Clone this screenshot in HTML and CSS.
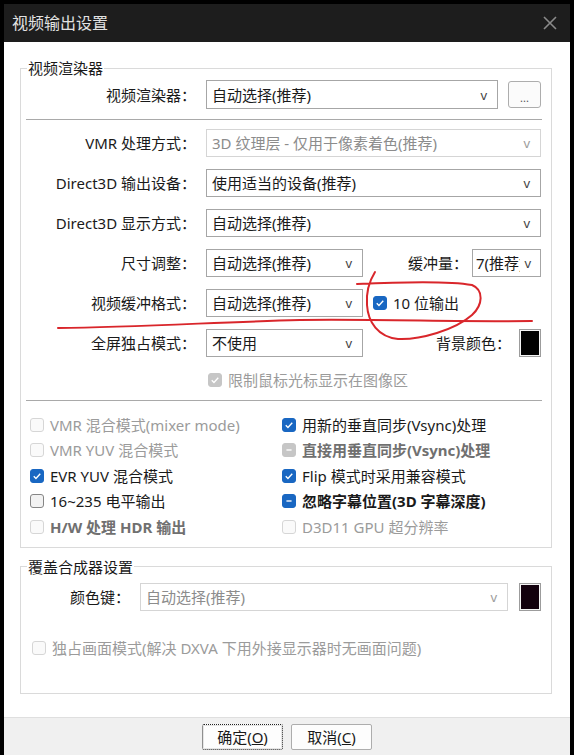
FILE: index.html
```html
<!DOCTYPE html>
<html lang="zh-CN">
<head>
	<meta charset="UTF-8">
	<meta name="viewport" content="width=device-width, initial-scale=1.0">
	<title>视频输出设置</title>
	<link rel="stylesheet" href="styles.css">
</head>
<body>
	<div class="window">
		<div class="titlebar">
			<span class="title">视频输出设置</span>
			<svg class="close" viewBox="0 0 14 14"><path d="M1 1L13 13M13 1L1 13"/></svg>
		</div>
		<div class="content">
			<fieldset class="group renderer">
				<legend>视频渲染器</legend>
				<div class="row first">
					<span class="label">视频渲染器：</span>
					<div class="ctrl">
						<div class="select grow"><span class="val">自动选择(推荐)</span><span class="arrow">v</span></div>
						<button class="more">...</button>
					</div>
				</div>
				<div class="sep"></div>
				<div class="row">
					<span class="label">VMR 处理方式：</span>
					<div class="ctrl">
						<div class="select grow disabled"><span class="val">3D 纹理层 - 仅用于像素着色(推荐)</span><span class="arrow">v</span></div>
					</div>
				</div>
				<div class="row">
					<span class="label">Direct3D 输出设备：</span>
					<div class="ctrl">
						<div class="select grow"><span class="val">使用适当的设备(推荐)</span><span class="arrow">v</span></div>
					</div>
				</div>
				<div class="row">
					<span class="label">Direct3D 显示方式：</span>
					<div class="ctrl">
						<div class="select grow"><span class="val">自动选择(推荐)</span><span class="arrow">v</span></div>
					</div>
				</div>
				<div class="row">
					<span class="label">尺寸调整：</span>
					<div class="ctrl">
						<div class="select mid"><span class="val">自动选择(推荐)</span><span class="arrow">v</span></div>
						<span class="sublabel buffer">缓冲量：</span>
						<div class="select tiny"><span class="val">7(推荐)</span><span class="arrow">v</span></div>
					</div>
				</div>
				<div class="row">
					<span class="label">视频缓冲格式：</span>
					<div class="ctrl">
						<div class="select mid"><span class="val">自动选择(推荐)</span><span class="arrow">v</span></div>
						<span class="cb ten-bit">
							<span class="box on"><svg viewBox="0 0 14 14"><path d="M3.2 7.2L5.8 9.8L10.8 4.4"/></svg></span>
							<span>10 位输出</span>
						</span>
					</div>
				</div>
				<div class="row">
					<span class="label">全屏独占模式：</span>
					<div class="ctrl">
						<div class="select mid"><span class="val">不使用</span><span class="arrow">v</span></div>
						<span class="sublabel bg">背景颜色：</span>
						<span class="swatch"><i class="black"></i></span>
					</div>
				</div>
				<div class="row check-row">
					<span></span>
					<span class="cb muted confine">
						<span class="box dis-on"><svg viewBox="0 0 14 14"><path d="M3.2 7.2L5.8 9.8L10.8 4.4"/></svg></span>
						<span>限制鼠标光标显示在图像区</span>
					</span>
				</div>
				<div class="sep"></div>
				<div class="checks">
					<span class="cb muted"><span class="box dis"></span><span>VMR 混合模式(mixer mode)</span></span>
					<span class="cb"><span class="box on"><svg viewBox="0 0 14 14"><path d="M3.2 7.2L5.8 9.8L10.8 4.4"/></svg></span><span>用新的垂直同步(Vsync)处理</span></span>
					<span class="cb muted"><span class="box dis"></span><span>VMR YUV 混合模式</span></span>
					<span class="cb grey bold"><span class="box dis-on"><svg viewBox="0 0 14 14"><path d="M4 7H10"/></svg></span><span>直接用垂直同步(Vsync)处理</span></span>
					<span class="cb"><span class="box on"><svg viewBox="0 0 14 14"><path d="M3.2 7.2L5.8 9.8L10.8 4.4"/></svg></span><span>EVR YUV 混合模式</span></span>
					<span class="cb"><span class="box on"><svg viewBox="0 0 14 14"><path d="M3.2 7.2L5.8 9.8L10.8 4.4"/></svg></span><span>Flip 模式时采用兼容模式</span></span>
					<span class="cb"><span class="box"></span><span>16~235 电平输出</span></span>
					<span class="cb bold"><span class="box on"><svg viewBox="0 0 14 14"><path d="M4 7H10"/></svg></span><span>忽略字幕位置(3D 字幕深度)</span></span>
					<span class="cb grey bold"><span class="box dis"></span><span>H/W 处理 HDR 输出</span></span>
					<span class="cb muted"><span class="box dis"></span><span>D3D11 GPU 超分辨率</span></span>
				</div>
			</fieldset>

			<fieldset class="group overlay">
				<legend>覆盖合成器设置</legend>
				<div class="row key-row">
					<span class="label">颜色键：</span>
					<div class="ctrl">
						<div class="select grow disabled"><span class="val">自动选择(推荐)</span><span class="arrow">v</span></div>
						<span class="swatch key"><i class="dark"></i></span>
					</div>
				</div>
				<div class="exclusive">
					<span class="cb muted"><span class="box dis"></span><span>独占画面模式(解决 DXVA 下用外接显示器时无画面问题)</span></span>
				</div>
			</fieldset>
		</div>
		<div class="footer">
			<button class="btn default">确定(<u>O</u>)</button>
			<button class="btn">取消(<u>C</u>)</button>
		</div>
	</div>

	<!-- red pen marks drawn over the screenshot -->
	<svg class="marks" viewBox="0 0 574 755">
		<path d="M58 328C140 327 220 322 300 320C380 319 460 322 532 321"/>
		<path d="M357 284C400 282 450 281 472 285C484 290 483 305 472 315C455 330 420 340 398 339C378 337 368 322 367 305C366 292 370 280 375 272"/>
	</svg>
</body>
</html>
```

FILE: styles.css
```css
* {
	box-sizing: border-box;
}

body {
	margin: 0;
	background: #000;
	font-family: "Noto Sans", "Noto Sans CJK SC", sans-serif;
	font-size: 15px;
	color: #1a1a1a;
	position: relative;
	height: 755px;
	overflow: hidden;
}

.window {
	margin: 4px 4px 0;
	width: 566px;
	background: #fff;
}

.titlebar {
	height: 38px;
	background: #1d1d1d;
	display: flex;
	align-items: center;
	justify-content: space-between;
	padding: 0 13px 0 8px;
}

.title {
	color: #e2e2e2;
	font-size: 16px;
	line-height: 20px;
}

.close {
	width: 14px;
	height: 14px;
	stroke: #8a8a8a;
	stroke-width: 1.6;
	fill: none;
}

.content {
	padding: 16px 18px 23px 16px;
}

.group {
	margin: 0;
	border: 1px solid #dadada;
	padding: 2px 10px 7px 6px;
	min-width: 0;
}

.group legend {
	padding: 0 1px;
	line-height: 20px;
	font-size: 15px;
}

.overlay {
	margin-top: 9px;
	padding-top: 6px;
	padding-bottom: 35px;
}

.row {
	display: grid;
	grid-template-columns: 169px 1fr;
	column-gap: 10px;
	align-items: center;
	height: 28px;
	margin-top: 12px;
	line-height: 20px;
}

.row.first {
	height: 29px;
	margin-top: 0;
}

.label {
	text-align: right;
	white-space: nowrap;
}

.ctrl {
	display: flex;
	align-items: center;
	height: 100%;
}

.sep {
	height: 1px;
	background: #a9a9a9;
	margin: 10px -1px 9px;
}

.sep + .row {
	margin-top: 0;
}

.select {
	display: flex;
	align-items: center;
	height: 100%;
	border: 1px solid #a6a6a6;
	background: #fff;
	padding: 0 10px 0 5px;
	white-space: nowrap;
}

.select .val {
	flex: 1;
	min-width: 0;
	overflow: hidden;
}

.arrow {
	font-size: 13px;
	color: #444;
	margin-left: 4px;
}

.select.disabled {
	border-color: #d5d5d5;
	color: #8c8c8c;
}

.select.disabled .arrow {
	color: #9c9c9c;
}

.grow {
	flex: 1;
}

.mid {
	width: 157px;
}

.tiny {
	width: 69px;
	padding: 0 9px 0 3px;
}

.more {
	width: 33px;
	height: 27px;
	margin-left: 10px;
	border: 1px solid #adadad;
	border-radius: 3px;
	background: #fbfbfb;
	color: #555;
	font-size: 11px;
	padding: 6px 0 0;
	font-family: inherit;
}

.sublabel {
	flex: 1;
	text-align: right;
	white-space: nowrap;
}

.buffer {
	margin-right: 4px;
}

.bg {
	margin-right: 8px;
}

.swatch {
	width: 22px;
	height: 28px;
	border: 1px solid #9c9c9c;
	padding: 1px;
	background: #f4f4f4;
	flex: none;
}

.swatch i {
	display: block;
	height: 100%;
}

.swatch .black {
	background: #000;
}

.swatch .dark {
	background: #12000d;
}

.swatch.key {
	margin-left: 11px;
}

/* checkboxes */
.cb {
	display: inline-flex;
	align-items: center;
	gap: 6px;
	white-space: nowrap;
}

.box {
	width: 14px;
	height: 14px;
	border: 1px solid #858585;
	border-radius: 3px;
	background: #f2f2f2;
	flex: none;
	display: flex;
}

.box svg {
	width: 12px;
	height: 12px;
	fill: none;
	stroke: #fff;
	stroke-width: 1.6;
}

.box.on {
	background: #1967c2;
	border-color: #1967c2;
}

.box.dis {
	border-color: #d6d6d6;
	background: #fafafa;
}

.box.dis-on {
	background: #c6c6c6;
	border-color: #c6c6c6;
}

.muted {
	color: #9b9b9b;
}

.grey {
	color: #707070;
}

.bold {
	font-weight: bold;
}

.ten-bit {
	margin-left: 10px;
}

.check-row {
	height: 20px;
	margin-top: 13px;
}

.confine {
	margin-left: 2px;
}

.checks {
	display: grid;
	grid-template-columns: 252px 1fr;
	grid-auto-rows: 25.5px;
	align-items: center;
	margin-top: 11px;
	line-height: 20px;
}

.checks .cb {
	padding-left: 3px;
}

.key-row {
	grid-template-columns: 103px 1fr;
	margin-top: 0;
}

.exclusive {
	margin-top: 27px;
	height: 20px;
	line-height: 20px;
	padding-left: 5px;
	display: flex;
	align-items: center;
}

.footer {
	border-top: 1px solid #dfdfdf;
	background: #f0f0f0;
	height: 60px;
	padding-top: 6px;
	display: flex;
	justify-content: center;
	gap: 8px;
}

.btn {
	width: 81px;
	height: 26px;
	border: 1px solid #adadad;
	border-radius: 2px;
	background: #fdfdfd;
	font-family: inherit;
	font-size: 15px;
	color: #1a1a1a;
	padding: 0;
	line-height: 20px;
}

.btn.default {
	border: 1px dotted #222;
	box-shadow: inset 0 0 0 1px #e6e6e6;
}

.marks {
	position: absolute;
	top: 0;
	left: 0;
	width: 574px;
	height: 755px;
	fill: none;
	stroke: #d9262b;
	stroke-width: 2;
	stroke-linecap: round;
	pointer-events: none;
}
```
